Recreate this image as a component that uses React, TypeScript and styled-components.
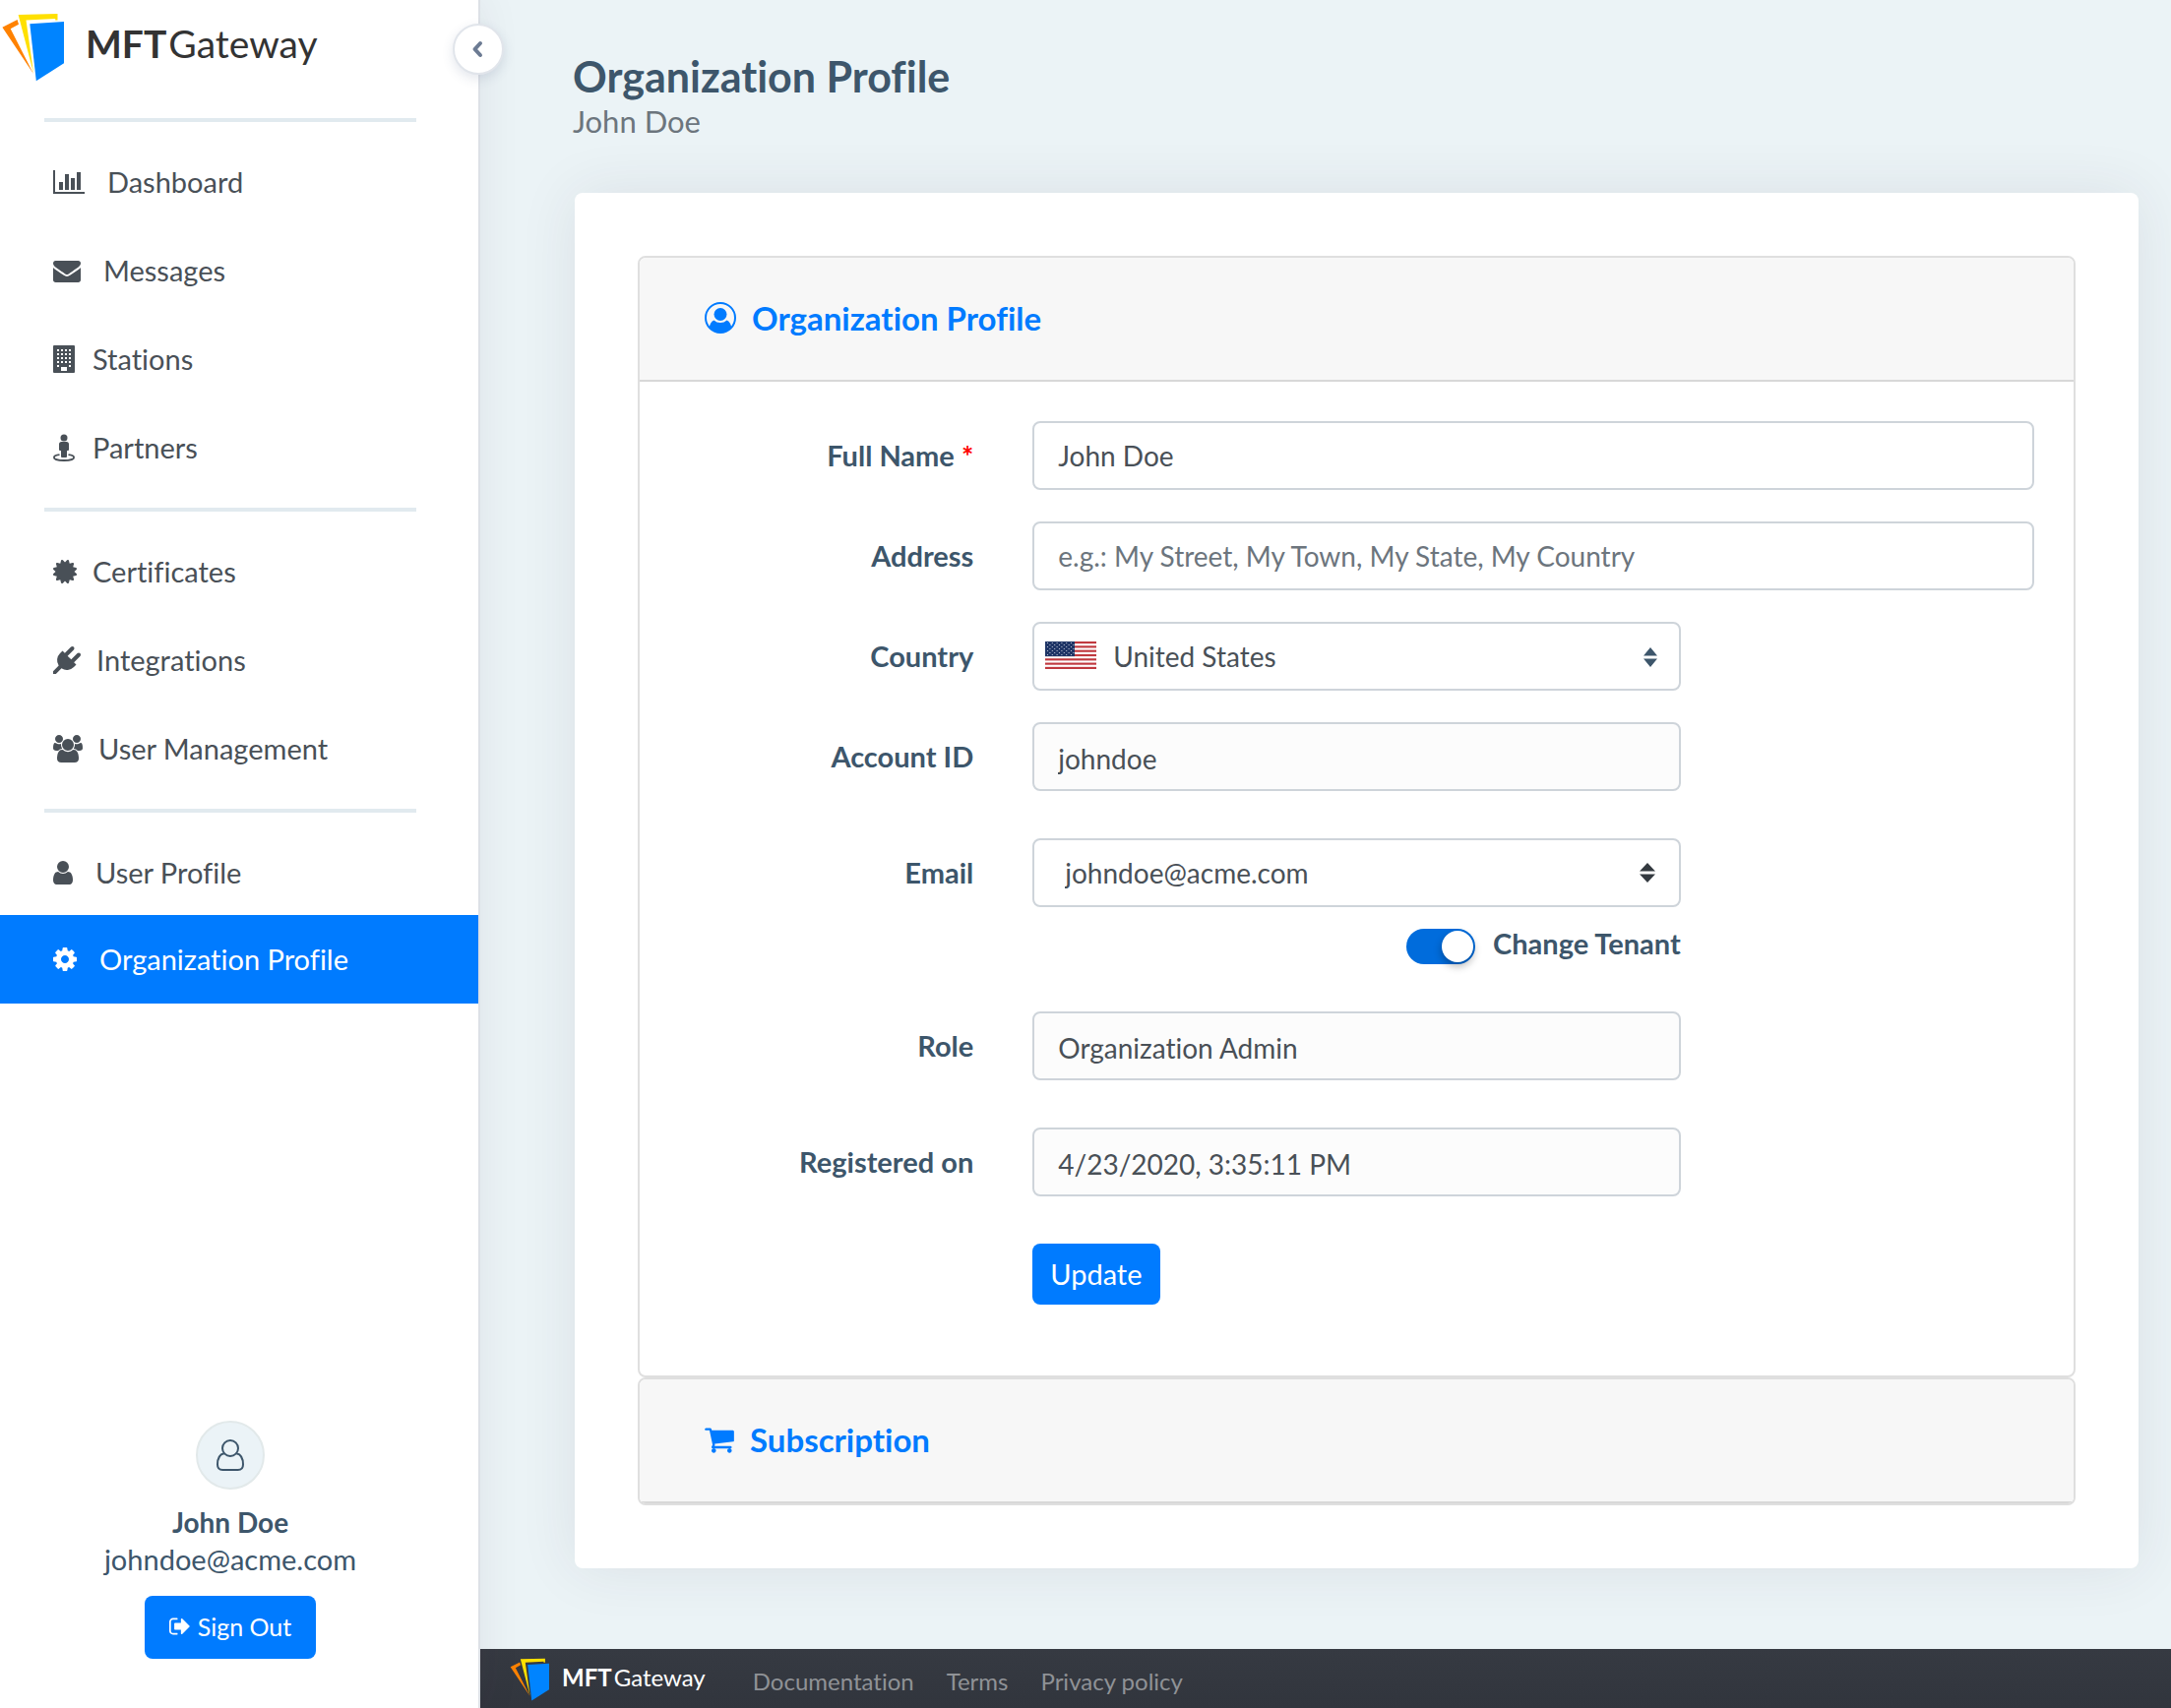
import React, { ReactNode, useState } from "react";
import styled, { createGlobalStyle, css } from "styled-components";

const color = {
  primary: "#007bff",
  heading: "#3d566b",
  text: "#495057",
  muted: "#6c757d",
  page: "#ebf3f6",
  rule: "#e1eaef",
  border: "#ced4da",
  panelBorder: "#dfdfdf",
};

const GlobalStyle = createGlobalStyle`
  *, *::before, *::after { box-sizing: border-box; }
  body {
    margin: 0;
    background: ${color.page};
    color: ${color.text};
    font-family: Lato, "Open Sans", "Liberation Sans", sans-serif;
    font-size: 28px;
    line-height: 38px;
    font-variant-ligatures: none;
  }
  button, input, select { font: inherit; color: inherit; }
`;

/* ---------- icons ---------- */

const Glyph = styled.svg<{ $w: number; $h?: number }>`
  display: block;
  flex: none;
  width: ${(p) => p.$w}px;
  height: ${(p) => p.$h ?? 28}px;
  fill: currentColor;
`;

const ChartIcon = () => (
  <Glyph $w={32} viewBox="0 0 32 28" shapeRendering="crispEdges">
    <path d="M0 2h2v22h30v2H0z" />
    <path d="M6 14h4v8H6zM12 6h4v16h-4zM18 10h4v12h-4zM24 4h4v18h-4z" />
  </Glyph>
);

const EnvelopeIcon = () => (
  <Glyph $w={28} viewBox="0 0 1792 1792">
    <path d="M1792 710v794q0 66-47 113t-113 47h-1472q-66 0-113-47t-47-113v-794q44 49 101 87 362 246 497 345 57 42 92.5 65.5t94.5 48 110 24.5h2q51 0 110-24.5t94.5-48 92.5-65.5q170-123 498-345 57-39 100-87zm0-294q0 79-49 151t-122 123q-376 261-468 325-10 7-42.5 31t-54 38.5-52 32.5-57.5 27-50 9h-2q-23 0-50-9t-57.5-27-52-32.5-54-38.5-42.5-31q-91-64-262-182.5t-205-142.5q-62-42-117-115.5t-55-136.5q0-78 41.5-130t118.5-52h1472q65 0 112.5 47t47.5 113z" />
  </Glyph>
);

const BuildingIcon = () => (
  <Glyph $w={24} viewBox="0 0 24 28">
    <path
      fillRule="evenodd"
      d="M1 0h20a1 1 0 0 1 1 1v26a1 1 0 0 1-1 1H1a1 1 0 0 1-1-1V1a1 1 0 0 1 1-1zM4 4v2h2V4zM8 4v2h2V4zM12 4v2h2V4zM16 4v2h2V4zM4 8v2h2V8zM8 8v2h2V8zM12 8v2h2V8zM16 8v2h2V8zM4 12v2h2v-2zM8 12v2h2v-2zM12 12v2h2v-2zM16 12v2h2v-2zM4 16v2h2v-2zM8 16v2h2v-2zM12 16v2h2v-2zM16 16v2h2v-2zM4 20v2h2v-2zM16 20v2h2v-2zM8 22v4h6v-4z"
    />
  </Glyph>
);

const StreetViewIcon = () => (
  <Glyph $w={24} viewBox="0 0 24 28">
    <circle cx="11" cy="4" r="3.5" />
    <path d="M8.500 8h5a2.500 2.500 0 0 1 2.500 2.500V16a1 1 0 0 1-1 1h-1v6a1 1 0 0 1-1 1H9a1 1 0 0 1-1-1v-6H7a1 1 0 0 1-1-1v-5.500A2.500 2.500 0 0 1 8.500 8z" />
    <path
      d="M6.500 21.200C3 21.700.9 22.700.9 23.900c0 1.800 4.500 3.100 10.100 3.100s10.100-1.300 10.100-3.100c0-1.200-2.100-2.200-5.600-2.700"
      fill="none"
      stroke="currentColor"
      strokeWidth="1.8"
    />
  </Glyph>
);

const CertificateIcon = () => (
  <Glyph $w={24} viewBox="128 0 1536 1792">
    <path d="M1504 896l138 135q30 28 20 70-12 41-52 51l-188 48 53 186q12 41-19 70-29 31-70 19l-186-53-48 188q-10 40-51 52-12 2-19 2-31 0-51-22l-135-138-135 138q-28 30-70 20-41-11-51-52l-48-188-186 53q-41 12-70-19-31-29-19-70l53-186-188-48q-40-10-52-51-10-42 20-70l138-135-138-135q-30-28-20-70 12-41 52-51l188-48-53-186q-12-41 19-70 29-31 70-19l186 53 48-188q10-41 51-51 41-12 70 19l135 139 135-139q29-30 70-19 41 10 51 51l48 188 186-53q41-12 70 19 31 29 19 70l-53 186 188 48q40 10 52 51 10 42-20 70z" />
  </Glyph>
);

const PlugIcon = () => (
  <Glyph $w={28} viewBox="0 0 1792 1792">
    <path d="M1755 453q37 38 37 90.5t-37 90.500l-401 400 150 150-160 160q-163 163-389.500 186.500t-411.500-100.500l-362 362h-181v-181l362-362q-124-185-100.500-411.500t186.500-389.500l160-160 150 150 400-401q38-37 91-37t90 37 37 90.500-37 90.500l-400 401 234 234 401-400q38-37 91-37t90 37z" />
  </Glyph>
);

const UsersIcon = () => (
  <Glyph $w={30} viewBox="64 0 1920 1792">
    <path d="M657 896q-162 5-265 128h-134q-82 0-138-40.500t-56-118.500q0-353 124-353 6 0 43.500 21t97.500 42.500 119 21.500q67 0 133-23-5 37-5 66 0 139 81 256zm1071 637q0 120-73 189.500t-194 69.500h-874q-121 0-194-69.500t-73-189.500q0-53 3.500-103.500t14-109 26.500-108.500 43-97.500 62-81 85.500-53.500 111.500-20q10 0 43 21.500t73 48 107 48 135 21.500 135-21.500 107-48 73-48 43-21.500q61 0 111.500 20t85.500 53.500 62 81 43 97.500 26.500 108.500 14 109 3.500 103.500zm-1024-1277q0 106-75 181t-181 75-181-75-75-181 75-181 181-75 181 75 75 181zm704 384q0 159-112.500 271.500t-271.500 112.500-271.500-112.500-112.500-271.500 112.500-271.500 271.500-112.500 271.500 112.500 112.500 271.500zm576 225q0 78-56 118.500t-138 40.500h-134q-103-123-265-128 81-117 81-256 0-29-5-66 66 23 133 23 59 0 119-21.500t97.500-42.500 43.500-21q124 0 124 353zm-128-609q0 106-75 181t-181 75-181-75-75-181 75-181 181-75 181 75 75 181z" />
  </Glyph>
);

const UserIcon = () => (
  <Glyph $w={20} viewBox="256 0 1280 1792">
    <path d="M1536 1399q0 109-62.500 187t-150.500 78h-854q-88 0-150.500-78t-62.500-187q0-85 8.500-160.500t31.500-152 58.500-131 94-89 134.500-34.500q131 128 313 128t313-128q76 0 134.500 34.500t94 89 58.500 131 31.500 152 8.500 160.500zm-256-887q0 159-112.500 271.500t-271.500 112.500-271.500-112.500-112.500-271.500 112.500-271.500 271.500-112.500 271.500 112.500 112.500 271.500z" />
  </Glyph>
);

const CogIcon = () => (
  <Glyph $w={24} viewBox="128 0 1536 1792">
    <path d="M1152 896q0-106-75-181t-181-75-181 75-75 181 75 181 181 75 181-75 75-181zm512-109v222q0 12-8 23t-20 13l-185 28q-19 54-39 91 35 50 107 138 10 12 10 25t-9 23q-27 37-99 108t-94 71q-12 0-26-9l-138-108q-44 23-91 38-16 136-29 186-7 28-36 28h-222q-14 0-24.500-8.500t-11.500-21.500l-28-184q-49-16-90-37l-141 107q-10 9-25 9-14 0-25-11-126-114-165-168-7-10-7-23 0-12 8-23 15-21 51-66.500t54-70.500q-27-50-41-99l-183-27q-13-2-21-12.500t-8-23.500v-222q0-12 8-23t19-13l186-28q14-46 39-92-40-57-107-138-10-12-10-24 0-10 9-23 26-36 98.500-107.500t94.500-71.500q13 0 26 10l138 107q44-23 91-38 16-136 29-186 7-28 36-28h222q14 0 24.500 8.500t11.500 21.500l28 184q49 16 90 37l142-107q9-9 24-9 13 0 25 10 129 119 165 170 7 8 7 22 0 12-8 23-15 21-51 66.500t-54 70.500q26 50 41 98l183 28q13 2 21 12.500t8 23.500z" />
  </Glyph>
);

const CartIcon = () => (
  <Glyph $w={30} $h={32} viewBox="64 0 1664 1792">
    <path d="M704 1536q0 52-38 90t-90 38-90-38-38-90 38-90 90-38 90 38 38 90zm896 0q0 52-38 90t-90 38-90-38-38-90 38-90 90-38 90 38 38 90zm128-1088v512q0 24-16.500 42.500t-40.500 21.500l-1044 122q13 60 13 70 0 16-24 64h920q26 0 45 19t19 45-19 45-45 19h-1024q-26 0-45-19t-19-45q0-11 8-31.500t16-36 21.500-40 15.500-29.500l-177-823h-204q-26 0-45-19t-19-45 19-45 45-19h256q16 0 28.500 6.500t19.500 15.500 13 24.500 8 26 5.500 29.500 4.500 26h1201q26 0 45 19t19 45z" />
  </Glyph>
);

const SignOutIcon = () => (
  <Glyph $w={22} $h={24} viewBox="64 0 1664 1792">
    <path d="M704 1440q0 4 1 20t.5 26.500-3 23.500-10 19.500-20.500 6.500h-320q-119 0-203.500-84.500t-84.500-203.500v-704q0-119 84.500-203.500t203.500-84.500h320q13 0 22.500 9.500t9.500 22.500q0 4 1 20t.5 26.500-3 23.500-10 19.500-20.500 6.500h-320q-66 0-113 47t-47 113v704q0 66 47 113t113 47h312l11.500 1 11.500 3 8 5.500 7 9 2 13.500zm928-544q0 26-19 45l-544 544q-19 19-45 19t-45-19-19-45v-288h-448q-26 0-45-19t-19-45v-384q0-26 19-45t45-19h448v-288q0-26 19-45t45-19 45 19l544 544q19 19 19 45z" />
  </Glyph>
);

const UserCircleIcon = () => (
  <Glyph $w={32} $h={32} viewBox="0 0 32 32">
    <circle cx="16" cy="16" r="15" fill="none" stroke="currentColor" strokeWidth="2" />
    <circle cx="16" cy="12.500" r="6.500" />
    <path d="M9.500 18.400A9 9 0 0 0 16 21a9 9 0 0 0 6.500-2.600c2.600 1 4.200 3.700 4.700 7.200A14.500 14.500 0 0 1 16 31a14.500 14.500 0 0 1-11.200-5.400c.5-3.500 2.100-6.200 4.700-7.200z" />
  </Glyph>
);

const UserOutlineIcon = () => (
  <Glyph $w={28} $h={34} viewBox="0 0 28 34">
    <g fill="none" stroke="currentColor" strokeWidth="2">
      <circle cx="14" cy="10" r="8" />
      <path d="M7.700 15.200C3 16.200 1 20.500 1 26.500 1 30 3.200 32 6.200 32h15.600c3 0 5.200-2 5.200-5.500 0-6-2-10.300-6.700-11.300" />
    </g>
  </Glyph>
);

const ChevronLeftIcon = () => (
  <Glyph $w={12} $h={18} viewBox="0 0 12 18">
    <path d="M9 3L3.500 9 9 15" fill="none" stroke="currentColor" strokeWidth="4" strokeLinecap="round" strokeLinejoin="round" />
  </Glyph>
);

const LogoMark = ({ size }: { size: "large" | "small" }) => (
  <Glyph $w={size === "large" ? 64 : 41} $h={size === "large" ? 70 : 44} viewBox="0 0 64 70">
    <path fill="#ff8200" d="M.4 14.700L15.600 7l1.400 4.700-8.300 4.600L32 62z" />
    <path fill="#ffe000" d="M16.600 2L56.500 1v6.500h-2.300V6L24.500 7.400 32 61z" />
    <path fill="#0084ff" d="M28.300 11.300L63 9v42.300L34.800 69.300z" />
  </Glyph>
);

/* ---------- layout ---------- */

const Layout = styled.div`
  display: flex;
  min-height: 100vh;
`;

const Sidebar = styled.aside`
  position: relative;
  z-index: 1;
  flex: none;
  display: flex;
  flex-direction: column;
  width: 488px;
  border-right: 2px solid #dde1e6;
  background: #fff;
  box-shadow: 0 0 40px rgba(60, 40, 70, 0.08);
`;

const Main = styled.div`
  flex: 1;
  min-width: 0;
  display: flex;
  flex-direction: column;
`;

const Brand = styled.a<{ $small?: boolean }>`
  display: flex;
  color: #333;
  text-decoration: none;
  font-size: 39px;
  line-height: 46px;
  gap: 21px;
  padding: 13px 0 0 2px;
  ${(p) =>
    p.$small &&
    css`
      color: #fff;
      font-size: 24px;
      line-height: 28px;
      gap: 12px;
      padding: 9px 0 0;
    `}
`;

const BrandName = styled.span<{ $small?: boolean }>`
  padding-top: ${(p) => (p.$small ? 6 : 8)}px;

  b {
    margin-right: 2px;
  }
`;

const CollapseButton = styled.button`
  position: absolute;
  top: 24px;
  right: -26px;
  display: flex;
  align-items: center;
  justify-content: center;
  width: 52px;
  height: 52px;
  padding: 0 2px 0 0;
  border: 2px solid #e1e5eb;
  border-radius: 50%;
  background: #fff;
  color: #6c7b93;
  box-shadow: 0 4px 12px rgba(60, 80, 120, 0.14);
`;

const Nav = styled.nav`
  padding-top: 37px;
`;

const Divider = styled.hr`
  height: 4px;
  margin: 0 63px 0 45px;
  border: 0;
  background: ${color.rule};
`;

const NavGroup = styled.ul`
  margin: 0;
  padding: 16px 0;
  list-style: none;
`;

const NavLink = styled.a<{ $active?: boolean; $gap: number }>`
  display: flex;
  align-items: center;
  gap: ${(p) => p.$gap}px;
  height: 90px;
  padding-left: 54px;
  color: ${color.text};
  font-size: 29px;
  text-decoration: none;
  ${(p) =>
    p.$active &&
    css`
      margin-top: -2px;
      background: ${color.primary};
      color: #fff;
    `}
`;

const Account = styled.div`
  display: flex;
  flex-direction: column;
  align-items: center;
  margin-top: auto;
  padding: 0 18px 50px 0;
  color: ${color.heading};
`;

const Avatar = styled.div`
  display: flex;
  align-items: center;
  justify-content: center;
  width: 70px;
  height: 70px;
  margin-bottom: 14px;
  border: 2px solid #e2e9ea;
  border-radius: 50%;
  background: #ebf3f7;
`;

const AccountName = styled.strong`
  font-size: 28px;
`;

const AccountEmail = styled.span`
  font-size: 29px;
`;

const SignOutButton = styled.button`
  display: flex;
  align-items: center;
  gap: 7px;
  height: 64px;
  margin-top: 18px;
  padding: 0 25px 2px;
  border: 0;
  border-radius: 8px;
  background: ${color.primary};
  color: #fff;
  font-size: 25px;
`;

const PageHeader = styled.header`
  padding: 52px 33px 0 94px;
`;

const Title = styled.h1`
  margin: 0;
  color: ${color.heading};
  font-size: 43px;
  line-height: 52px;
`;

const Subtitle = styled.p`
  margin: 0;
  color: ${color.muted};
  font-size: 31px;
  line-height: 38px;
`;

const Card = styled.main`
  margin: 54px 33px 82px 96px;
  padding: 64px;
  border-radius: 8px;
  background: #fff;
  box-shadow: 0 0 60px rgba(60, 40, 70, 0.09);
`;

const Panel = styled.section`
  overflow: hidden;
  border: 2px solid ${color.panelBorder};
  border-radius: 8px;
`;

const PanelHeader = styled.h2`
  margin: 0;
  border-bottom: 2px solid #d8d8d8;
  background: #f7f7f7;
  font-size: 33px;
  line-height: 40px;
`;

const PanelToggle = styled.button`
  display: flex;
  align-items: center;
  gap: 16px;
  width: 100%;
  height: 124px;
  padding: 0 66px 2px;
  border: 0;
  background: none;
  color: ${color.primary};
  text-align: left;
`;

/* ---------- form ---------- */

const Form = styled.form`
  display: flex;
  flex-direction: column;
  gap: 48px;
  padding: 40px 40px 72px;
`;

const FieldGroup = styled.div`
  display: flex;
  flex-direction: column;
  gap: 32px;
`;

const Row = styled.div`
  display: grid;
  grid-template-columns: repeat(12, minmax(0, 1fr));
  column-gap: 60px;
`;

const Label = styled.label`
  grid-column: span 3;
  color: ${color.heading};
  font-size: 29px;
  font-weight: 700;
  line-height: 70px;
  text-align: right;
`;

const Required = styled.span`
  color: #f00;
`;

const Cell = styled.div<{ $span: number; $offset?: boolean }>`
  grid-column: ${(p) => (p.$offset ? "4 /" : "")} span ${(p) => p.$span};
`;

const fieldBox = css`
  display: block;
  width: 100%;
  height: 70px;
  border: 2px solid ${color.border};
  border-radius: 8px;
  background: #fff;
`;

const Input = styled.input`
  ${fieldBox}
  padding: 0 24px;
  outline: none;

  &::placeholder {
    color: ${color.muted};
    opacity: 1;
  }

  &:disabled {
    padding-top: 4px;
    background: #fcfcfc;
    color: ${color.text};
  }
`;

const SelectFrame = styled.div`
  position: relative;
`;

const Select = styled.select<{ $flag?: boolean }>`
  ${fieldBox}
  appearance: none;
  padding: 0 60px 0 ${(p) => (p.$flag ? 80 : 31)}px;
  outline: none;
`;

const Flag = styled.svg`
  position: absolute;
  top: 20px;
  left: 13px;
  width: 52px;
  height: 28px;
  pointer-events: none;
`;

const Caret = styled.svg<{ $dark?: boolean }>`
  position: absolute;
  top: ${(p) => (p.$dark ? 25 : 26)}px;
  right: ${(p) => (p.$dark ? 26 : 24)}px;
  width: ${(p) => (p.$dark ? 16 : 14)}px;
  height: 20px;
  fill: ${(p) => (p.$dark ? "#343a40" : color.heading)};
  pointer-events: none;
`;

const SwitchRow = styled.div`
  display: flex;
  align-items: center;
  justify-content: flex-end;
  gap: 18px;
  height: 36px;
  margin-top: 22px;
`;

const Switch = styled.input`
  appearance: none;
  display: flex;
  align-items: center;
  width: 70px;
  height: 36px;
  margin: 0;
  padding: 2px;
  border-radius: 18px;
  background: #c4ccd4;

  &::before {
    content: "";
    width: 32px;
    height: 32px;
    border-radius: 50%;
    background: #fff;
    box-shadow: 0 4px 8px rgba(0, 0, 0, 0.3);
  }

  &:checked {
    justify-content: flex-end;
    background: #006cdc;
  }
`;

const SwitchLabel = styled.label`
  padding-bottom: 6px;
  color: ${color.heading};
  font-size: 29px;
  font-weight: 700;
`;

const SubmitButton = styled.button`
  height: 62px;
  padding: 0 18px;
  border: 0;
  border-radius: 8px;
  background: ${color.primary};
  color: #fff;
  font-size: 29px;
`;

/* ---------- footer ---------- */

const Footer = styled.footer`
  display: flex;
  gap: 48px;
  height: 60px;
  margin-top: auto;
  padding-left: 30px;
  background: linear-gradient(#363a42, #31353d);
`;

const FooterLinks = styled.nav`
  display: flex;
  gap: 33px;
  padding-top: 18px;
  font-size: 24px;
  line-height: 30px;
`;

const FooterLink = styled.a`
  color: #8f9296;
  text-decoration: none;
`;

/* ---------- parts ---------- */

const starRows = [0, 1, 2, 3, 4, 5, 6];

const UsFlag = () => (
  <Flag viewBox="0 0 52 28" aria-hidden="true">
    <rect width="52" height="28" fill="#fff" />
    {[0, 2, 4, 6, 8, 10, 12].map((n) => (
      <rect key={n} y={(n * 28) / 13} width="52" height={28 / 13} fill="#c0393f" />
    ))}
    <rect width="30" height="15.100" fill="#1f3566" />
    {starRows.map((r) =>
      [0, 1, 2, 3, 4, 5].map((c) => (
        <circle key={`${r}-${c}`} cx={2.500 + c * 4.800 + (r % 2) * 2.400} cy={1.500 + r * 2} r="0.6" fill="#d5dae6" />
      ))
    )}
  </Flag>
);

const SortCaret = ({ dark }: { dark?: boolean }) => (
  <Caret $dark={dark} viewBox="0 0 16 20" preserveAspectRatio="none" aria-hidden="true">
    <path d="M8 0l8 8.500H0zM8 20l8-8.500H0z" />
  </Caret>
);

type NavEntry = { label: string; icon: ReactNode; gap: number; active?: boolean };

const navGroups: NavEntry[][] = [
  [
    { label: "Dashboard", icon: <ChartIcon />, gap: 23 },
    { label: "Messages", icon: <EnvelopeIcon />, gap: 23 },
    { label: "Stations", icon: <BuildingIcon />, gap: 16 },
    { label: "Partners", icon: <StreetViewIcon />, gap: 16 },
  ],
  [
    { label: "Certificates", icon: <CertificateIcon />, gap: 16 },
    { label: "Integrations", icon: <PlugIcon />, gap: 16 },
    { label: "User Management", icon: <UsersIcon />, gap: 16 },
  ],
  [
    { label: "User Profile", icon: <UserIcon />, gap: 23 },
    { label: "Organization Profile", icon: <CogIcon />, gap: 23, active: true },
  ],
];

const ReadOnlyField = ({ id, label, value }: { id: string; label: string; value: string }) => (
  <Row>
    <Label htmlFor={id}>{label}</Label>
    <Cell $span={6}>
      <Input id={id} value={value} disabled />
    </Cell>
  </Row>
);

export default function App() {
  const [name, setName] = useState("John Doe");
  const [address, setAddress] = useState("");
  const [tenant, setTenant] = useState(true);

  return (
    <>
      <GlobalStyle />
      <Layout>
        <Sidebar>
          <Brand href="#">
            <LogoMark size="large" />
            <BrandName>
              <b>MFT</b>Gateway
            </BrandName>
          </Brand>
          <CollapseButton type="button" aria-label="Collapse sidebar">
            <ChevronLeftIcon />
          </CollapseButton>
          <Nav>
            {navGroups.map((group, i) => (
              <React.Fragment key={i}>
                <Divider />
                <NavGroup>
                  {group.map((item) => (
                    <li key={item.label}>
                      <NavLink href="#" $active={item.active} $gap={item.gap}>
                        {item.icon}
                        {item.label}
                      </NavLink>
                    </li>
                  ))}
                </NavGroup>
              </React.Fragment>
            ))}
          </Nav>
          <Account>
            <Avatar>
              <UserOutlineIcon />
            </Avatar>
            <AccountName>John Doe</AccountName>
            <AccountEmail>johndoe@acme.com</AccountEmail>
            <SignOutButton type="button">
              <SignOutIcon />
              Sign Out
            </SignOutButton>
          </Account>
        </Sidebar>

        <Main>
          <PageHeader>
            <Title>Organization Profile</Title>
            <Subtitle>John Doe</Subtitle>
          </PageHeader>

          <Card>
            <Panel>
              <PanelHeader>
                <PanelToggle type="button" aria-expanded="true">
                  <UserCircleIcon />
                  Organization Profile
                </PanelToggle>
              </PanelHeader>
              <Form onSubmit={(e) => e.preventDefault()}>
                <FieldGroup>
                  <Row>
                    <Label htmlFor="name">
                      Full Name <Required>*</Required>
                    </Label>
                    <Cell $span={9}>
                      <Input id="name" value={name} onChange={(e) => setName(e.target.value)} />
                    </Cell>
                  </Row>
                  <Row>
                    <Label htmlFor="address">Address</Label>
                    <Cell $span={9}>
                      <Input
                        id="address"
                        value={address}
                        placeholder="e.g.: My Street, My Town, My State, My Country"
                        onChange={(e) => setAddress(e.target.value)}
                      />
                    </Cell>
                  </Row>
                  <Row>
                    <Label htmlFor="country">Country</Label>
                    <Cell $span={6}>
                      <SelectFrame>
                        <Select id="country" $flag>
                          <option>United States</option>
                        </Select>
                        <UsFlag />
                        <SortCaret />
                      </SelectFrame>
                    </Cell>
                  </Row>
                  <ReadOnlyField id="account" label="Account ID" value="johndoe" />
                </FieldGroup>
                <Row>
                  <Label htmlFor="email">Email</Label>
                  <Cell $span={6}>
                    <SelectFrame>
                      <Select id="email">
                        <option>johndoe@acme.com</option>
                      </Select>
                      <SortCaret dark />
                    </SelectFrame>
                    <SwitchRow>
                      <Switch
                        id="tenant"
                        type="checkbox"
                        checked={tenant}
                        onChange={(e) => setTenant(e.target.checked)}
                      />
                      <SwitchLabel htmlFor="tenant">Change Tenant</SwitchLabel>
                    </SwitchRow>
                  </Cell>
                </Row>
                <ReadOnlyField id="role" label="Role" value="Organization Admin" />
                <ReadOnlyField id="registered" label="Registered on" value="4/23/2020, 3:35:11 PM" />
                <Row>
                  <Cell $span={6} $offset>
                    <SubmitButton type="submit">Update</SubmitButton>
                  </Cell>
                </Row>
              </Form>
            </Panel>
            <Panel>
              <PanelHeader>
                <PanelToggle type="button" aria-expanded="false">
                  <CartIcon />
                  Subscription
                </PanelToggle>
              </PanelHeader>
            </Panel>
          </Card>

          <Footer>
            <Brand href="#" $small>
              <LogoMark size="small" />
              <BrandName $small>
                <b>MFT</b>Gateway
              </BrandName>
            </Brand>
            <FooterLinks>
              <FooterLink href="#">Documentation</FooterLink>
              <FooterLink href="#">Terms</FooterLink>
              <FooterLink href="#">Privacy policy</FooterLink>
            </FooterLinks>
          </Footer>
        </Main>
      </Layout>
    </>
  );
}
